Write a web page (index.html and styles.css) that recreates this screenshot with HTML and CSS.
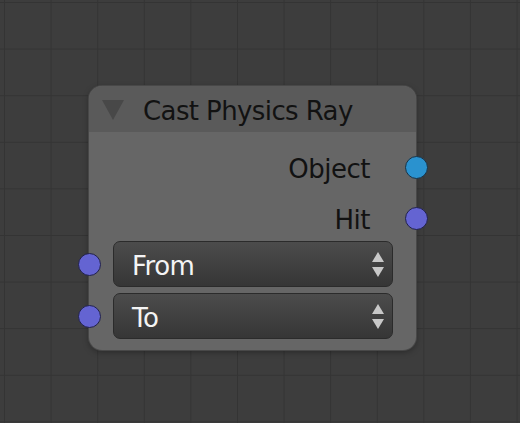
FILE: index.html
```html
<!DOCTYPE html>
<html>
<head>
<meta charset="utf-8">
<link rel="stylesheet" href="styles.css">
</head>
<body>
<div class="canvas">
  <div class="node">
    <div class="header">
      <span class="collapse"></span>
      <span class="title">Cast Physics Ray</span>
    </div>
    <div class="body">
      <div class="outputs">
        <div class="out-row"><span class="label">Object</span><span class="socket out blue"></span></div>
        <div class="out-row"><span class="label">Hit</span><span class="socket out purple"></span></div>
      </div>
      <div class="inputs">
        <div class="field"><span class="socket in purple"></span><span class="ftext">From</span><span class="spin"><i class="up"></i><i class="down"></i></span></div>
        <div class="field"><span class="socket in purple"></span><span class="ftext">To</span><span class="spin"><i class="up"></i><i class="down"></i></span></div>
      </div>
    </div>
  </div>
</div>
</body>
</html>
```

FILE: styles.css
```css
html, body {
  margin: 0;
  padding: 0;
}
body {
  width: 520px;
  height: 423px;
  overflow: hidden;
  background-color: #3d3d3d;
  font-family: "DejaVu Sans", sans-serif;
}
.canvas {
  position: relative;
  width: 520px;
  height: 423px;
  background-image:
    linear-gradient(to right, #343434 1px, transparent 1px),
    linear-gradient(to bottom, #343434 1px, transparent 1px);
  background-size: 46.6px 46.6px;
  background-position: 4px 2px;
}
.node {
  position: absolute;
  left: 89px;
  top: 86px;
  width: 327px;
  height: 264px;
  box-sizing: border-box;
  border-radius: 13px;
  background: #666666;
  box-shadow: 0 0 0 1px #484848, 0 2px 6px rgba(0,0,0,0.35);
  display: flex;
  flex-direction: column;
}
.header {
  height: 46px;
  background: #5a5a5a;
  border-radius: 13px 13px 0 0;
  display: flex;
  align-items: center;
  padding-left: 13px;
  box-sizing: border-box;
}
.collapse {
  width: 0;
  height: 0;
  border-left: 11px solid transparent;
  border-right: 11px solid transparent;
  border-top: 20px solid #484848;
  margin-top: 2px;
}
.title {
  margin-left: 19px;
  font-size: 26px;
  letter-spacing: -0.6px;
  color: #121212;
  line-height: 1;
  margin-top: 4px;
}
.body {
  display: flex;
  flex-direction: column;
  padding: 12px 0 11px 0;
}
.outputs {
  display: flex;
  flex-direction: column;
  gap: 5px;
}
.out-row {
  height: 46px;
  display: flex;
  align-items: center;
  justify-content: flex-end;
  position: relative;
  padding-right: 46px;
}
.label {
  font-size: 26px;
  letter-spacing: -0.5px;
  color: #121212;
  margin-top: 4px;
}
.inputs {
  display: flex;
  flex-direction: column;
  gap: 6px;
  padding: 0 23px 0 24px;
}
.field {
  position: relative;
  height: 46px;
  box-sizing: border-box;
  border: 1px solid #2b2b2b;
  border-radius: 7px;
  background: linear-gradient(to bottom, #4c4c4c, #363636);
  display: flex;
  align-items: center;
  padding-left: 18px;
  padding-right: 8px;
}
.ftext {
  flex: 1;
  font-size: 26px;
  letter-spacing: -0.5px;
  color: #f4f4f4;
  margin-top: 4px;
}
.spin {
  display: flex;
  flex-direction: column;
  gap: 5px;
  align-items: center;
}
.spin i {
  display: block;
  width: 0;
  height: 0;
  border-left: 6px solid transparent;
  border-right: 6px solid transparent;
}
.spin .up {
  border-bottom: 10px solid #c8c8c8;
}
.spin .down {
  border-top: 10px solid #c8c8c8;
}
.socket {
  position: absolute;
  width: 23px;
  height: 23px;
  box-sizing: border-box;
  border-radius: 50%;
  border: 1px solid #1e1e2e;
  top: 50%;
  margin-top: -11.5px;
}
.socket.out {
  right: -11.5px;
}
.socket.in {
  left: -36.5px;
}
.blue {
  background: #2a92cf;
  border-color: #1a3346;
}
.purple {
  background: #6464d2;
  border-color: #22224a;
}
```
